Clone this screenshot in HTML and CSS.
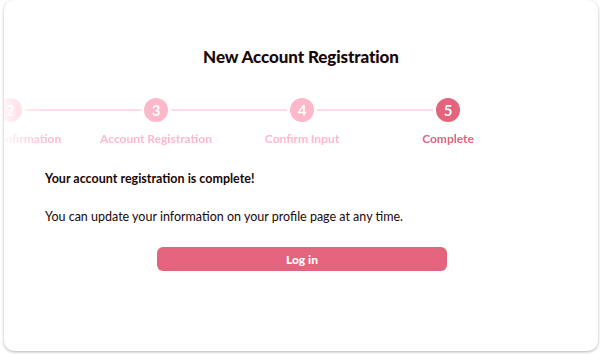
FILE: index.html
```html
<!DOCTYPE html>
<html lang="en">
<head>
    <meta charset="UTF-8">
    <meta name="viewport" content="width=device-width, initial-scale=1.0">
    <title>New Account Registration</title>
    <link rel="stylesheet" href="styles.css">
</head>
<body>

<div class="card">
    <h1>New Account Registration</h1>

    <div class="stepper">
        <ol class="steps">
            <li class="step done">
                <div class="step-top"><span class="line"></span><span class="num">1</span><span class="line"></span></div>
                <span class="label">Terms of Service</span>
            </li>
            <li class="step done">
                <div class="step-top"><span class="line"></span><span class="num">2</span><span class="line"></span></div>
                <span class="label">Email Confirmation</span>
            </li>
            <li class="step done">
                <div class="step-top"><span class="line"></span><span class="num">3</span><span class="line"></span></div>
                <span class="label">Account Registration</span>
            </li>
            <li class="step done">
                <div class="step-top"><span class="line"></span><span class="num">4</span><span class="line"></span></div>
                <span class="label">Confirm Input</span>
            </li>
            <li class="step current">
                <div class="step-top"><span class="line"></span><span class="num">5</span><span class="line none"></span></div>
                <span class="label">Complete</span>
            </li>
        </ol>
    </div>

    <div class="message">
        <p class="lead">Your account registration is complete!</p>
        <p>You can update your information on your profile page at any time.</p>
    </div>

    <div class="actions">
        <button type="button" class="btn-login">Log in</button>
    </div>
</div>

</body>
</html>
```

FILE: styles.css
```css
html, body {
    margin: 0;
    background-color: #ffffff;
}
body {
    font-family: 'Lato', 'Noto Sans', sans-serif;
    color: #1c0c0c;
    padding: 0 2px 3px 4px;
}
.card {
    height: 351px;
    box-sizing: border-box;
    background: #ffffff;
    border-radius: 10px;
    box-shadow: 0 1px 3px rgba(0, 0, 0, 0.3);
    overflow: hidden;
    padding-top: 45px;
}
h1 {
    margin: 0;
    font-size: 17px;
    font-weight: 900;
    text-align: center;
    letter-spacing: -0.1px;
    line-height: 24px;
    color: #1a0707;
}
/* barre d'étapes, scrollée pour que l'étape courante soit visible */
.stepper {
    margin-top: 29px;
    overflow: hidden;
    -webkit-mask-image: linear-gradient(to right, rgba(0, 0, 0, 0.15) 0, #000 48px);
    mask-image: linear-gradient(to right, rgba(0, 0, 0, 0.15) 0, #000 48px);
}
.steps {
    list-style: none;
    margin: 0 0 0 -213px;
    padding: 0;
    display: flex;
}
.step {
    flex: 0 0 146px;
    display: flex;
    flex-direction: column;
    align-items: center;
}
.step-top {
    width: 100%;
    display: flex;
    align-items: center;
    gap: 3px;
}
.line {
    flex: 1;
    height: 2px;
    background: #ffdbe3;
}
.line.none {
    background: transparent;
}
.num {
    width: 24px;
    height: 24px;
    border-radius: 50%;
    display: flex;
    align-items: center;
    justify-content: center;
    color: #ffffff;
    font-size: 15px;
    font-weight: 700;
}
.label {
    margin-top: 9px;
    font-size: 12px;
    font-weight: 700;
    white-space: nowrap;
    line-height: 16px;
}
.done .num {
    background: #ffb8c9;
}
.done .label {
    color: #ffb8c9;
}
.current .num {
    background: #e3647c;
}
.current .label {
    color: #e3647c;
}
.message {
    padding: 0 41px;
    margin-top: 24px;
}
.message p {
    margin: 0 0 22px;
    font-size: 12.5px;
    line-height: 16px;
    color: #1a0707;
}
.message .lead {
    font-weight: 700;
}
.actions {
    display: flex;
    justify-content: center;
    margin-top: 8px;
}
.btn-login {
    width: 290px;
    height: 24px;
    margin-left: 2px;
    border: none;
    border-radius: 6px;
    background: #e3647c;
    color: #ffffff;
    font-family: inherit;
    font-size: 12px;
    font-weight: 900;
    cursor: pointer;
}
.btn-login:hover {
    background: #d4566e;
}
```
